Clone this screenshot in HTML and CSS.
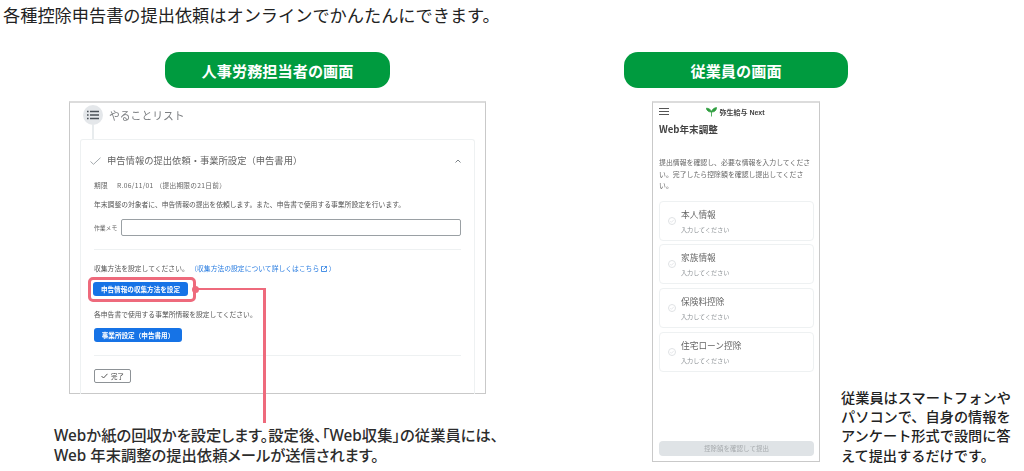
FILE: index.html
```
<!DOCTYPE html>
<html lang="ja">
<head>
<meta charset="utf-8">
<title>各種控除申告書の提出依頼</title>
<link rel="stylesheet" href="styles.css">
</head>
<body>
<main class="page">
  <h1 class="headline">各種控除申告書の提出依頼はオンラインでかんたんにできます。</h1>
  <div class="columns">
    <section class="admin">
      <h2 class="pill">人事労務担当者の画面</h2>
      <div class="window admin-window">
        <div class="todo-head">
          <span class="todo-icon">
            <svg width="12" height="10" viewBox="0 0 12 10"><path d="M0 1.500h1.600M3 1.500h9M0 5h1.600M3 5h9M0 8.500h1.600M3 8.500h9" stroke="#4a5157" stroke-width="1.400" fill="none"/></svg>
          </span>
          <span class="todo-title">やることリスト</span>
        </div>
        <div class="todo-line"></div>
        <div class="card">
          <div class="card-head">
            <svg class="card-check" width="11" height="8" viewBox="0 0 11 8"><path d="M.5 4.500 3.500 7.300 10.500.7" stroke="#a3a9ad" stroke-width="1" fill="none"/></svg>
            <span class="card-title">申告情報の提出依頼・事業所設定（申告書用）</span>
            <svg class="card-chevron" width="6" height="4" viewBox="0 0 6 4"><path d="M.5 3.500 3 1l2.500 2.500" stroke="#7d8388" stroke-width="1" fill="none"/></svg>
          </div>
          <div class="card-body">
            <p class="due"><span class="due-label">期限</span><span>R.06/11/01 （提出期限の21日前）</span></p>
            <p class="desc">年末調整の対象者に、申告情報の提出を依頼します。また、申告書で使用する事業所設定を行います。</p>
            <div class="memo"><span class="memo-label">作業メモ</span><span class="memo-input"></span></div>
            <hr class="rule rule-top">
            <p class="small collect">収集方法を設定してください。 <span class="link">（収集方法の設定について詳しくはこちら<svg class="ext" width="6" height="6" viewBox="0 0 6 6"><path d="M2.500.5H.5v5h5V3.500M3.500.5h2v2M5.500.5 2.500 3.500" stroke="#1b75e0" stroke-width=".8" fill="none"/></svg> ）</span></p>
            <div class="callout">
              <span class="btn btn-wide">申告情報の収集方法を設定</span>
              <span class="callout-dot"></span>
              <span class="callout-line"></span>
            </div>
            <p class="small office">各申告書で使用する事業所情報を設定してください。</p>
            <span class="btn btn-office">事業所設定（申告書用）</span>
            <hr class="rule rule-bottom">
            <span class="done"><svg width="7" height="6" viewBox="0 0 7 6"><path d="M.5 3 2.500 5 6.500.8" stroke="#444" stroke-width=".9" fill="none"/></svg>完了</span>
          </div>
        </div>
      </div>
      <p class="caption">Webか紙の回収かを設定します。設定後、「Web収集」の従業員には、<br>Web 年末調整の提出依頼メールが送信されます。</p>
    </section>
    <section class="staff">
      <h2 class="pill">従業員の画面</h2>
      <div class="staff-row">
        <div class="window staff-window">
          <div class="app-bar">
            <svg class="menu" width="10" height="7" viewBox="0 0 10 7"><path d="M0 .5h10M0 3.500h10M0 6.500h10" stroke="#555" stroke-width="1" fill="none"/></svg>
            <span class="brand">
              <svg width="11" height="10" viewBox="0 0 11 10"><path d="M5.500 9.500V5C5 2.500 3 1.200.4 1.200.7 3.800 2.700 5 5.500 5 8.300 5 10.300 3.800 10.600.6 8 .8 6 2.500 5.500 5" fill="#2f9e3f" stroke="#2f9e3f" stroke-width=".8"/></svg>
              <span class="brand-jp">弥生給与</span> <span class="brand-en">Next</span>
            </span>
          </div>
          <h3 class="app-title">Web年末調整</h3>
          <p class="app-text">提出情報を確認し、必要な情報を入力してください。完了したら控除額を確認し提出してください。</p>
          <ul class="forms">
            <li class="form-card"><svg class="status" width="8" height="8" viewBox="0 0 8 8"><circle cx="4" cy="4" r="3.500" fill="none" stroke="#dfe2e4"/><path d="M2.300 4.100 3.500 5.300 5.800 2.800" fill="none" stroke="#dfe2e4" stroke-width=".8"/></svg><div><div class="form-name">本人情報</div><div class="form-sub">入力してください</div></div></li>
            <li class="form-card"><svg class="status" width="8" height="8" viewBox="0 0 8 8"><circle cx="4" cy="4" r="3.500" fill="none" stroke="#dfe2e4"/><path d="M2.300 4.100 3.500 5.300 5.800 2.800" fill="none" stroke="#dfe2e4" stroke-width=".8"/></svg><div><div class="form-name">家族情報</div><div class="form-sub">入力してください</div></div></li>
            <li class="form-card"><svg class="status" width="8" height="8" viewBox="0 0 8 8"><circle cx="4" cy="4" r="3.500" fill="none" stroke="#dfe2e4"/><path d="M2.300 4.100 3.500 5.300 5.800 2.800" fill="none" stroke="#dfe2e4" stroke-width=".8"/></svg><div><div class="form-name">保険料控除</div><div class="form-sub">入力してください</div></div></li>
            <li class="form-card"><svg class="status" width="8" height="8" viewBox="0 0 8 8"><circle cx="4" cy="4" r="3.500" fill="none" stroke="#dfe2e4"/><path d="M2.300 4.100 3.500 5.300 5.800 2.800" fill="none" stroke="#dfe2e4" stroke-width=".8"/></svg><div><div class="form-name">住宅ローン控除</div><div class="form-sub">入力してください</div></div></li>
          </ul>
          <div class="submit">控除額を確認して提出</div>
        </div>
        <p class="note">従業員はスマートフォンやパソコンで、自身の情報をアンケート形式で設問に答えて提出するだけです。</p>
      </div>
    </section>
  </div>
</main>
</body>
</html>
```

FILE: styles.css
```
* { box-sizing: border-box; }
html, body { margin: 0; padding: 0; background: #fff; }
body { font-family: "Noto Sans CJK JP", "Noto Sans", sans-serif; color: #222; }
.page { width: 1024px; height: 471px; overflow: hidden; }
.headline { margin: 0; height: 52px; padding-left: 3px; font-size: 17.200px; font-weight: 400; line-height: 30px; color: #222; white-space: nowrap; }
.columns { display: flex; }
.admin { width: 624px; padding-left: 54px; }
.staff { flex: 1; }
.pill { margin: 0; height: 36px; width: 225px; border-radius: 14px; background: #009b3f; color: #fff; font-size: 15.200px; font-weight: 700; line-height: 36px; text-align: center; }
.admin .pill { margin-left: 111px; margin-bottom: 13px; }
.staff .pill { width: 224px; margin-bottom: 13px; }
.window { background: #fff; border: 1px solid #c9c9c9; border-top: 2px solid #dcdcdc; filter: blur(.3px); }
.admin-window { margin-left: 15px; width: 417px; height: 293px; padding: 2px 10px 0; }
.todo-head { display: flex; align-items: center; gap: 6px; height: 20px; padding-left: 3px; }
.todo-icon { width: 20px; height: 20px; border-radius: 50%; background: #e4e7ea; display: flex; align-items: center; justify-content: center; }
.todo-title { font-size: 10.800px; line-height: 20px; color: #7c7f82; }
.todo-line { width: 2px; height: 14px; margin-left: 12px; background: #e8ecee; }
.card { height: 255px; border: 1px solid #eef1f2; border-bottom: 0; border-radius: 3px 3px 0 0; }
.card-head { display: flex; align-items: center; height: 39px; padding: 0 13px 0 9px; }
.card-check { margin-right: 6px; margin-top: 3px; }
.card-title { font-size: 9.300px; line-height: 12px; color: #666; white-space: nowrap; }
.card-chevron { margin-left: auto; margin-top: 2px; }
.card-body { padding: 0 13px; }
.due { margin: 0; height: 12px; font-size: 6.700px; line-height: 12px; color: #666; letter-spacing: .3px; white-space: nowrap; display: flex; gap: 9px; }
.due-label { width: 14px; flex: none; }
.desc { margin: 7px 0 0; font-size: 6.800px; line-height: 12px; color: #555; white-space: nowrap; }
.memo { display: flex; align-items: center; margin-top: 8px; height: 18px; }
.memo-label { width: 27px; font-size: 5.800px; color: #666; white-space: nowrap; }
.memo-input { width: 340px; height: 17px; border: 1px solid #9aa0a4; border-radius: 2px; }
.rule { margin: 0; border: 0; height: 1px; width: 367px; background: #eef1f2; }
.rule-top { margin-top: 13px; }
.small { margin: 0; font-size: 6.800px; line-height: 12px; color: #555; white-space: nowrap; }
.collect { margin-top: 12px; }
.link { color: #2a7de1; }
.ext { vertical-align: -1px; margin-left: 2px; }
.callout { position: relative; width: 108px; height: 25px; margin: 3px 0 0 -6px; padding: 2px; border: 3px solid #ee6a7c; border-radius: 5px; }
.callout-dot { position: absolute; left: 101px; top: 6px; width: 7px; height: 7px; border-radius: 50%; background: #ee6a7c; }
.callout-line { position: absolute; left: 105px; top: 8px; width: 70px; height: 135px; border-top: 2px solid #ee6a7c; border-right: 3px solid #ee6a7c; }
.btn { display: block; height: 14px; border-radius: 3px; background: #1673e6; color: #fff; font-size: 6.600px; font-weight: 700; line-height: 14px; text-align: center; white-space: nowrap; }
.btn-wide { width: 95px; }
.office { margin-top: 6px; }
.btn-office { width: 88px; margin-top: 8px; }
.rule-bottom { margin-top: 13px; }
.done { display: flex; align-items: center; justify-content: center; gap: 3px; width: 37px; height: 14px; margin-top: 13px; border: 1px solid #8d9296; border-radius: 2px; font-size: 6.500px; line-height: 12px; color: #444; }
.caption { margin: 31px 0 0; font-family: "Noto Sans", "Noto Sans CJK JP", sans-serif; font-feature-settings: "palt"; font-size: 15.300px; font-weight: 500; line-height: 20px; color: #2c2c2c; white-space: nowrap; }
.staff-row { display: flex; align-items: flex-end; padding-left: 28px; }
.staff-window { width: 168px; height: 361px; padding: 0 6px; flex: none; }
.app-bar { position: relative; display: flex; justify-content: center; align-items: center; height: 16px; margin-top: 1px; }
.menu { position: absolute; left: 0; top: 4px; }
.brand { display: flex; align-items: center; gap: 2px; padding-right: 1px; white-space: nowrap; }
.brand-jp { font-size: 7px; font-weight: 700; color: #444; }
.brand-en { font-size: 7px; font-weight: 700; color: #444; font-family: "Liberation Sans", sans-serif; }
.app-title { margin: 1px 0 0; font-size: 9.600px; font-weight: 700; line-height: 16px; color: #444; white-space: nowrap; }
.app-text { margin: 20px 0 0; width: 156px; font-size: 6.900px; line-height: 11.500px; color: #666; }
.forms { list-style: none; margin: 9px 0 0; padding: 0; width: 155px; }
.form-card { display: flex; align-items: center; height: 40px; margin-bottom: 3.700px; padding-left: 8px; border: 1px solid #eef1f2; border-radius: 4px; }
.status { margin-right: 5px; flex: none; }
.form-name { font-size: 8.700px; line-height: 14px; color: #666; white-space: nowrap; }
.form-sub { margin-top: 3px; font-size: 6.100px; line-height: 9px; color: #8a8f93; white-space: nowrap; }
.submit { width: 155px; height: 15px; margin-top: 69px; border-radius: 4px; background: #dfe3e6; color: #a7abae; font-size: 6.500px; line-height: 15px; text-align: center; }
.note { margin: 0 0 -3px 21px; width: 172px; font-size: 14.200px; font-weight: 500; line-height: 19.300px; color: #222; }
```
